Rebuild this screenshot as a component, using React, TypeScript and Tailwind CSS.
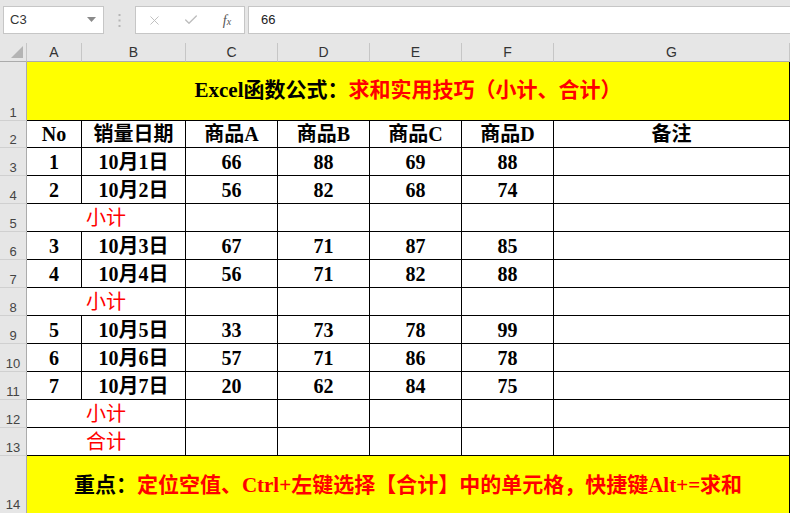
import React from "react";
import { X, Check } from "lucide-react";

const cols = ["A", "B", "C", "D", "E", "F", "G"];

type Row =
  | { kind: "data"; no: string; date: string; v: string[] }
  | { kind: "sub"; label: string };

const rows: Row[] = [
  { kind: "data", no: "1", date: "10月1日", v: ["66", "88", "69", "88"] },
  { kind: "data", no: "2", date: "10月2日", v: ["56", "82", "68", "74"] },
  { kind: "sub", label: "小计" },
  { kind: "data", no: "3", date: "10月3日", v: ["67", "71", "87", "85"] },
  { kind: "data", no: "4", date: "10月4日", v: ["56", "71", "82", "88"] },
  { kind: "sub", label: "小计" },
  { kind: "data", no: "5", date: "10月5日", v: ["33", "73", "78", "99"] },
  { kind: "data", no: "6", date: "10月6日", v: ["57", "71", "86", "78"] },
  { kind: "data", no: "7", date: "10月7日", v: ["20", "62", "84", "75"] },
  { kind: "sub", label: "小计" },
  { kind: "sub", label: "合计" },
];

const serif = "font-['Liberation_Serif','Noto_Sans_CJK_SC',serif]";
const cell =
  "bg-white border-r border-b border-black flex items-center justify-center text-[20px] font-bold text-black " +
  serif;

const RowHead = ({ n }: { n: number }) => (
  <div className="bg-[#e6e6e6] border-r border-b border-r-[#ababab] border-b-[#d0d0d0] flex items-end justify-center pb-[1px] text-[13px] leading-none text-[#444] font-['Liberation_Sans',sans-serif]">
    {n}
  </div>
);

const App: React.FC = () => {
  return (
    <div className="w-[790px] h-[513px] overflow-hidden bg-[#e6e6e6] font-['Liberation_Sans',sans-serif]">
      {/* formula bar */}
      <div className="h-[43px] flex items-start pt-[6px]">
        <div className="ml-[3px] w-[101px] h-[28px] bg-white border border-[#c6c6c6] flex items-center justify-between pl-[6px] pr-[7px]">
          <span className="text-[13px] text-[#333]">C3</span>
          <svg width="9" height="6" viewBox="0 0 9 6">
            <polygon points="0,0 9,0 4.5,5" fill="#8a8a8a" />
          </svg>
        </div>
        <div className="w-[31px] h-[28px] flex items-center justify-center">
          <svg width="3" height="13" viewBox="0 0 3 13">
            <rect x="0.5" y="0" width="2" height="2" fill="#b5b5b5" />
            <rect x="0.5" y="5.5" width="2" height="2" fill="#b5b5b5" />
            <rect x="0.5" y="11" width="2" height="2" fill="#b5b5b5" />
          </svg>
        </div>
        <div className="w-[110px] h-[28px] bg-white border border-[#c6c6c6] flex items-center">
          <div className="w-[36px] flex justify-center">
            <X size={15} strokeWidth={1.5} color="#bdbdbd" />
          </div>
          <div className="w-[38px] flex justify-center">
            <Check size={16} strokeWidth={2} color="#bdbdbd" />
          </div>
          <div className="w-[34px] flex justify-center text-[#555] italic font-['Liberation_Serif',serif] text-[14px]">
            f<span className="text-[10px] mt-[4px]">x</span>
          </div>
        </div>
        <div className="ml-[3px] flex-1 h-[28px] bg-white border border-r-0 border-[#c6c6c6] flex items-center pl-[12px] text-[13px] text-[#222]">
          66
        </div>
      </div>

      {/* sheet grid */}
      <div className="grid grid-cols-[27px_55px_104px_92px_92px_92px_92px_236px] grid-rows-[19px_59px_27px_repeat(11,28px)_60px]">
        {/* corner */}
        <div className="bg-[#e6e6e6] border-r border-b border-r-[#c6c6c6] border-b-[#ababab] flex items-end justify-end pr-[3px] pb-[3px]">
          <svg width="12" height="12" viewBox="0 0 12 12">
            <polygon points="12,0 12,12 0,12" fill="#b4b4b4" />
          </svg>
        </div>
        {cols.map((c) => (
          <div
            key={c}
            className="bg-[#e6e6e6] border-r border-b border-r-[#c6c6c6] border-b-[#ababab] flex items-center justify-center text-[14px] text-[#333]"
          >
            {c}
          </div>
        ))}

        {/* row 1 */}
        <RowHead n={1} />
        <div
          className={
            "col-span-7 bg-[#ffff00] border-r border-b border-black flex items-center justify-center text-[21px] font-bold " +
            serif
          }
        >
          <span className="text-black">Excel函数公式：</span>
          <span className="text-[#ff0000]">求和实用技巧（小计、合计）</span>
        </div>

        {/* row 2 */}
        <RowHead n={2} />
        {["No", "销量日期", "商品A", "商品B", "商品C", "商品D", "备注"].map((h) => (
          <div key={h} className={cell}>
            {h}
          </div>
        ))}

        {rows.map((r, i) => (
          <React.Fragment key={i}>
            <RowHead n={i + 3} />
            {r.kind === "data" ? (
              <>
                <div className={cell}>{r.no}</div>
                <div className={cell}>{r.date}</div>
                {r.v.map((v, j) => (
                  <div key={j} className={cell}>
                    {v}
                  </div>
                ))}
                <div className={cell}></div>
              </>
            ) : (
              <>
                <div
                  className={
                    "col-span-2 bg-white border-r border-b border-black flex items-center justify-center text-[20px] text-[#ff0000] " +
                    serif
                  }
                >
                  {r.label}
                </div>
                <div className={cell}></div>
                <div className={cell}></div>
                <div className={cell}></div>
                <div className={cell}></div>
                <div className={cell}></div>
              </>
            )}
          </React.Fragment>
        ))}

        {/* row 14 */}
        <div className="bg-[#e6e6e6] border-r border-r-[#ababab] flex items-end justify-center pb-[5px] text-[13px] leading-none text-[#444]">
          14
        </div>
        <div
          className={
            "col-span-7 bg-[#ffff00] border-r border-black flex items-start justify-center pt-[14px] text-[21px] font-bold " +
            serif
          }
        >
          <span className="text-black">重点：</span>
          <span className="text-[#ff0000]">
            定位空值、Ctrl+左键选择【合计】中的单元格，快捷键Alt+=求和
          </span>
        </div>
      </div>
    </div>
  );
};

export default App;
